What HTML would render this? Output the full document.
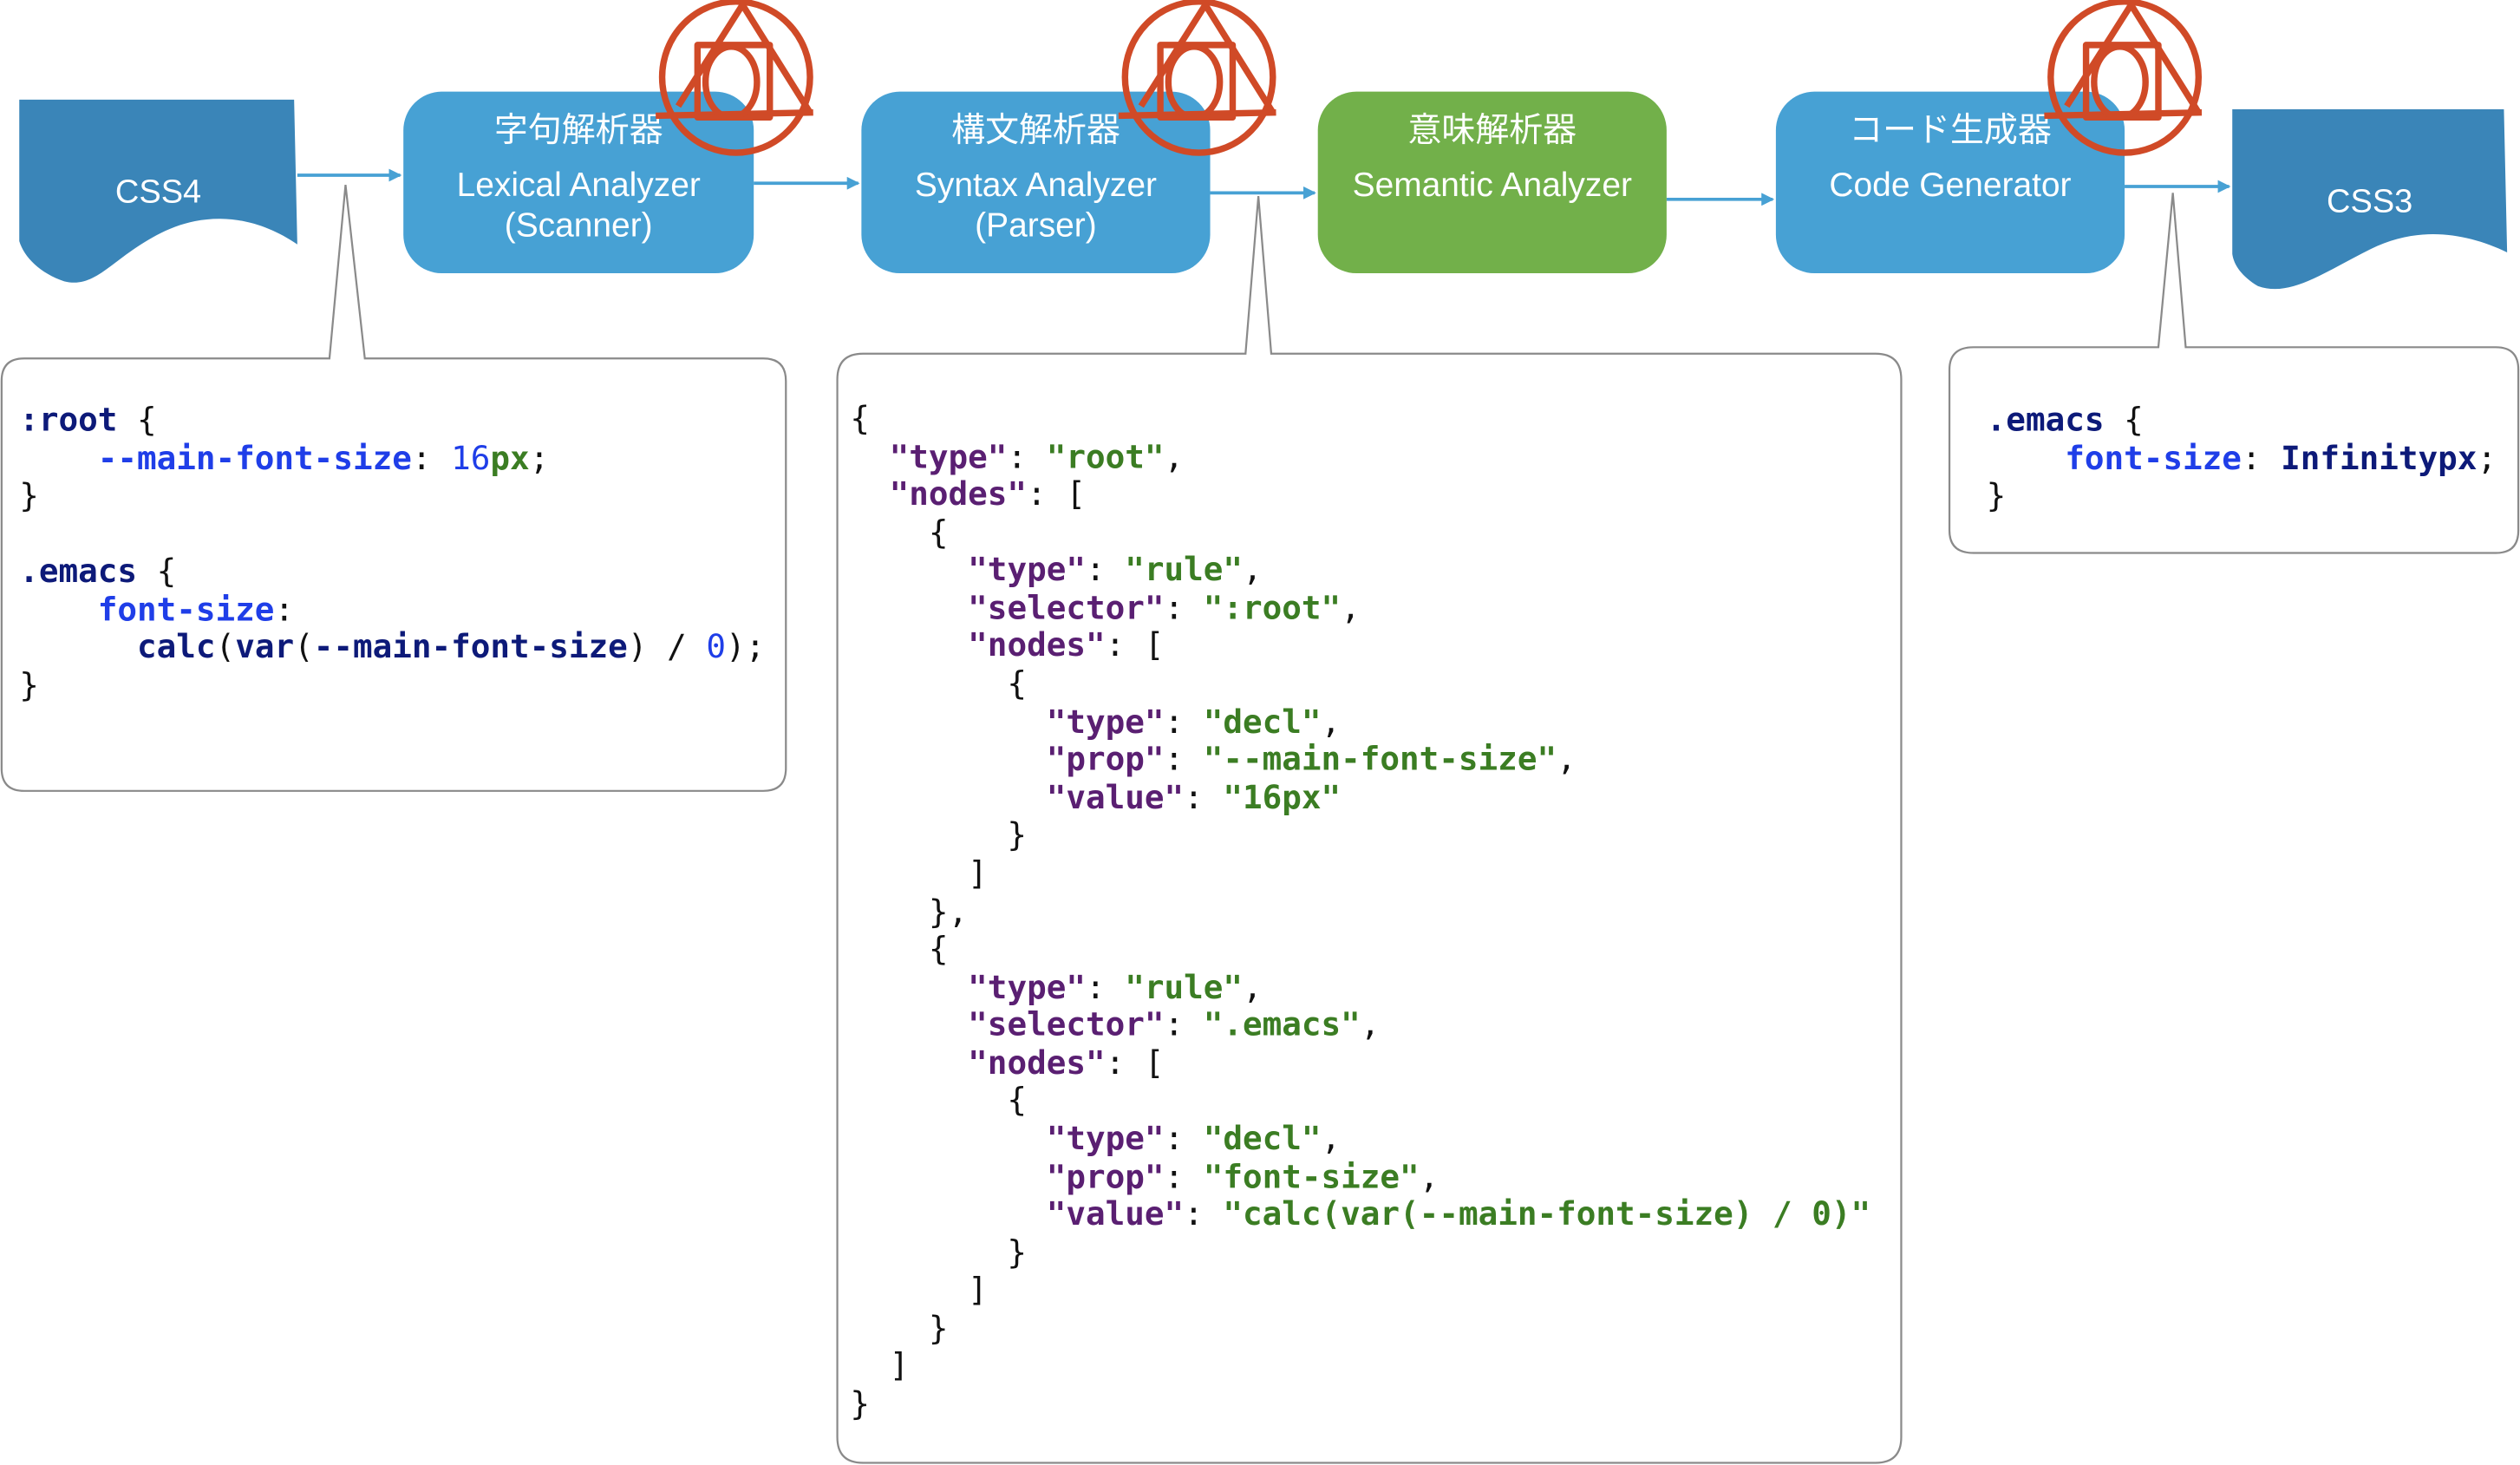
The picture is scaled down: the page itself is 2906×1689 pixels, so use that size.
<!DOCTYPE html>
<html><head><meta charset="utf-8"><style>
html,body{margin:0;padding:0;background:#fff;}
body{width:2906px;height:1689px;overflow:hidden;position:relative;}
#w{position:absolute;left:0;top:0;width:1568px;height:911px;transform:scale(1.8533);transform-origin:0 0;}
.box{position:absolute;border-radius:24px;color:#fff;font-family:"Liberation Sans","Noto Sans CJK JP",sans-serif;font-size:21px;text-align:center;}
.box div{position:absolute;left:0;right:0;line-height:24px;}
.bl{background:#47a1d4;}
.gr{background:#72b04a;}
pre{position:absolute;margin:0;font-family:"DejaVu Sans Mono",monospace;font-size:20.3px;line-height:23.58px;color:#111;}
.n{color:#0d1a79;font-weight:bold}
.p{color:#1f3ee8;font-weight:bold}
.b{color:#1f3ee8}
.g{color:#3b7d23;font-weight:bold}
.k{color:#5a1f72;font-weight:bold}
.doc{position:absolute;color:#fff;font-family:"Liberation Sans",sans-serif;font-size:20.5px;text-align:center;}
</style></head><body><div id="w">
<svg width="1568" height="911" style="position:absolute;left:0;top:0">
<defs><marker id="a" markerWidth="8" markerHeight="8" refX="7" refY="4" orient="auto" markerUnits="userSpaceOnUse"><path d="M0,0 L8,4 L0,8z" fill="#47a1d4"/></marker></defs>
<path d="M12,62 L183,62 L185,152 C160,135 130,130 100,145 C70,160 60,180 40,175 C25,170 15,160 12,150 Z" fill="#3a85b8"/>
<path d="M1389,68 L1558,68 L1560,157 C1535,145 1505,140 1475,155 C1445,170 1425,185 1405,178 C1395,172 1390,165 1389,158 Z" fill="#3a85b8"/>
<g stroke="#47a1d4" stroke-width="2" fill="none">
<line x1="185" y1="109" x2="249" y2="109" marker-end="url(#a)"/>
<line x1="469" y1="114" x2="534" y2="114" marker-end="url(#a)"/>
<line x1="753" y1="120" x2="818" y2="120" marker-end="url(#a)"/>
<line x1="1037" y1="124" x2="1103" y2="124" marker-end="url(#a)"/>
<line x1="1322" y1="116" x2="1387" y2="116" marker-end="url(#a)"/>
</g>
<g fill="#fff" stroke="#8a8a8a" stroke-width="1.2">
<path d="M15,223 L205,223 L215,115 L227,223 L475,223 Q489,223 489,237 L489,478 Q489,492 475,492 L15,492 Q1,492 1,478 L1,237 Q1,223 15,223 Z"/>
<path d="M537,220 L775,220 L783,122 L791,220 L1167,220 Q1183,220 1183,236 L1183,894 Q1183,910 1167,910 L537,910 Q521,910 521,894 L521,236 Q521,220 537,220 Z"/>
<path d="M1228,216 L1343,216 L1352,120 L1360,216 L1553,216 Q1567,216 1567,230 L1567,330 Q1567,344 1553,344 L1228,344 Q1213,344 1213,330 L1213,230 Q1213,216 1228,216 Z"/>
</g>
</svg>
<div class="doc" style="left:12px;width:173px;top:108px">CSS4</div>
<div class="doc" style="left:1389px;width:171px;top:114px">CSS3</div>
<div class="box bl" style="left:251px;top:57px;width:218px;height:113px"><div style="top:13px">字句解析器</div><div style="top:47px">Lexical Analyzer</div><div style="top:72px">(Scanner)</div></div>
<div class="box bl" style="left:536px;top:57px;width:217px;height:113px"><div style="top:13px">構文解析器</div><div style="top:47px">Syntax Analyzer</div><div style="top:72px">(Parser)</div></div>
<div class="box gr" style="left:820px;top:57px;width:217px;height:113px"><div style="top:13px">意味解析器</div><div style="top:47px">Semantic Analyzer</div></div>
<div class="box bl" style="left:1105px;top:57px;width:217px;height:113px"><div style="top:13px">コード生成器</div><div style="top:47px">Code Generator</div></div>
<svg width="1568" height="911" style="position:absolute;left:0;top:0">
<defs><g id="L" fill="none" stroke="#d04a27" stroke-width="4" stroke-linejoin="round">
<ellipse cx="0" cy="0" rx="46" ry="47"/>
<path d="M-36,18 L4,-45 L46,22"/>
<line x1="-50" y1="24" x2="48" y2="22"/>
<rect x="-24" y="-20" width="45" height="45"/>
<ellipse cx="-3" cy="3" rx="16" ry="22"/>
</g></defs>
<use href="#L" x="458" y="48"/>
<use href="#L" x="746" y="48"/>
<use href="#L" x="1322" y="48"/>
</svg>
<pre style="left:12px;top:250px"><span class="n">:root</span> {
    <span class="p">--main-font-size</span>: <span class="b">16</span><span class="g">px</span>;
}

<span class="n">.emacs</span> {
    <span class="p">font-size</span>:
      <span class="n">calc</span>(<span class="n">var</span>(<span class="n">--main-font-size</span>) / <span class="b">0</span>);
}</pre>
<pre style="left:529px;top:249px">{
  <span class="k">"type"</span>: <span class="g">"root"</span>,
  <span class="k">"nodes"</span>: [
    {
      <span class="k">"type"</span>: <span class="g">"rule"</span>,
      <span class="k">"selector"</span>: <span class="g">":root"</span>,
      <span class="k">"nodes"</span>: [
        {
          <span class="k">"type"</span>: <span class="g">"decl"</span>,
          <span class="k">"prop"</span>: <span class="g">"--main-font-size"</span>,
          <span class="k">"value"</span>: <span class="g">"16px"</span>
        }
      ]
    },
    {
      <span class="k">"type"</span>: <span class="g">"rule"</span>,
      <span class="k">"selector"</span>: <span class="g">".emacs"</span>,
      <span class="k">"nodes"</span>: [
        {
          <span class="k">"type"</span>: <span class="g">"decl"</span>,
          <span class="k">"prop"</span>: <span class="g">"font-size"</span>,
          <span class="k">"value"</span>: <span class="g">"calc(var(--main-font-size) / 0)"</span>
        }
      ]
    }
  ]
}</pre>
<pre style="left:1236px;top:250px"><span class="n">.emacs</span> {
    <span class="p">font-size</span>: <span class="n">Infinitypx</span>;
}</pre>
</div></body></html>
